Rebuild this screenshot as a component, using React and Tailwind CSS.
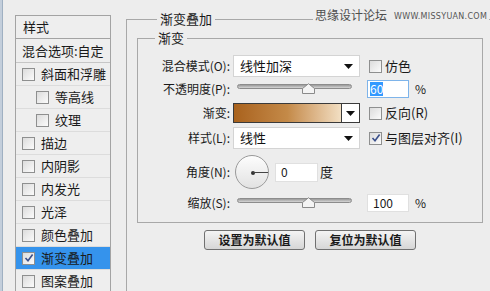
import React from "react";

const font = { fontFamily: '"Noto Sans CJK SC", "Noto Sans", sans-serif' };

const Check = ({ checked }) => (
  <span className="w-[13px] h-[13px] shrink-0 border border-[#8e8f8f] bg-gradient-to-br from-[#dcdcdc] to-[#fbfbfb] flex items-center justify-center">
    {checked && (
      <svg width="10" height="10" viewBox="0 0 10 10">
        <path d="M1.5 5 L4 7.8 L8.6 1.6" fill="none" stroke="#3a4f8a" strokeWidth="1.6" />
      </svg>
    )}
  </span>
);

const Arrow = () => (
  <svg width="9" height="5" viewBox="0 0 9 5">
    <path d="M0 0 H9 L4.5 5 Z" fill="#111" />
  </svg>
);

const Select = ({ value }) => (
  <div className="w-[127px] h-[22px] bg-white border border-[#d4d4d4] flex items-center justify-between pl-[6px] pr-[6px]">
    <span className="text-[13px] text-[#111]">{value}</span>
    <Arrow />
  </div>
);

const Slider = () => (
  <div className="w-[127px] h-[20px] relative">
    <div className="absolute left-[4px] right-[8px] top-[5px] h-[5px] rounded-full border border-[#8c8c8c] bg-gradient-to-b from-[#9a9a9a] to-[#d6d6d6]" />
    <svg className="absolute left-[69px] top-[4px]" width="13" height="11" viewBox="0 0 13 11">
      <path d="M0.5 10.5 V5.5 L6.5 0.7 L12.5 5.5 V10.5 Z" fill="#f4f4f4" stroke="#8a8a8a" />
    </svg>
  </div>
);

const Label = ({ children }) => (
  <span className="w-[95px] shrink-0 text-right pr-[3px] text-[12px] text-[#1a1a1a]">{children}</span>
);

const listRows = [
  { text: "斜面和浮雕", indent: false },
  { text: "等高线", indent: true },
  { text: "纹理", indent: true },
  { text: "描边" },
  { text: "内阴影" },
  { text: "内发光" },
  { text: "光泽" },
  { text: "颜色叠加" },
  { text: "渐变叠加", active: true, checked: true },
  { text: "图案叠加" },
];

export default function App() {
  return (
    <div className="w-[490px] h-[291px] overflow-hidden bg-[#ededed] relative flex text-[#1a1a1a]" style={font}>
      <div className="w-[3px] h-full bg-[#c3cedb] border-r border-[#9fb0c2] shrink-0" />

      {/* style list */}
      <div className="ml-[12px] mt-[15px] w-[96px] shrink-0 border border-[#a3a3a3] bg-[#eeeeee] h-[300px]">
        <div className="h-[23px] border-b border-[#a3a3a3] flex items-center pl-[7px] text-[13px]">样式</div>
        <div className="h-[24px] border-b border-[#c6c6c6] flex items-center pl-[6px] text-[13px] whitespace-nowrap">混合选项:自定</div>
        {listRows.map((r) => (
          <div
            key={r.text}
            className={`h-[23px] border-b border-[#dcdcdc] flex items-center gap-[6px] text-[13px] ${
              r.indent ? "pl-[20px]" : "pl-[6px]"
            } ${r.active ? "bg-[#3593ec]" : ""}`}
          >
            <Check checked={r.checked} />
            <span>{r.text}</span>
          </div>
        ))}
      </div>

      {/* right panel */}
      <fieldset className="ml-[15px] mt-[11px] w-[380px] h-[320px] shrink-0 border border-[#a8a8a8] pl-[10px]">
        <legend className="ml-[20px] px-[3px] text-[13px] leading-[16px]">渐变叠加</legend>

        <fieldset className="mt-[3px] w-[346px] border border-[#a8a8a8] pt-[9px] pb-[9px]">
          <legend className="ml-[17px] px-[3px] text-[13px] leading-[16px]">渐变</legend>

          <div className="flex items-center h-[22px]">
            <Label>混合模式(O):</Label>
            <Select value="线性加深" />
            <span className="ml-[9px] flex items-center gap-[3px] text-[13px]">
              <Check />
              仿色
            </span>
          </div>

          <div className="flex items-center h-[20px] mt-[2px]">
            <Label>不透明度(P):</Label>
            <Slider />
            <div className="ml-[7px] w-[42px] h-[18px] bg-white border border-[#7eb4ea] flex items-center pl-[2px]">
              <span className="bg-[#3399ff] text-white text-[12px] leading-[14px]">60</span>
            </div>
            <span className="ml-[6px] text-[12px]">%</span>
          </div>

          <div className="flex items-center h-[20px] mt-[4px]">
            <Label>渐变:</Label>
            <div className="w-[127px] h-[20px] flex border border-[#3a3a3a]">
              <div className="flex-1 bg-gradient-to-r from-[#a9621c] via-[#c48a48] to-[#f2dfc3]" />
              <div className="w-[18px] bg-white border-l border-[#3a3a3a] flex items-center justify-center">
                <Arrow />
              </div>
            </div>
            <span className="ml-[9px] flex items-center gap-[3px] text-[13px]">
              <Check />
              反向(R)
            </span>
          </div>

          <div className="flex items-center h-[22px] mt-[4px]">
            <Label>样式(L):</Label>
            <Select value="线性" />
            <span className="ml-[9px] flex items-center gap-[3px] text-[13px]">
              <Check checked />
              与图层对齐(I)
            </span>
          </div>

          <div className="flex items-center h-[34px] mt-[6px]">
            <Label>角度(N):</Label>
            <div className="ml-[2px] w-[34px] h-[34px] rounded-full border border-[#9a9a9a] bg-gradient-to-b from-[#fdfdfd] to-[#e2e2e2] relative">
              <div className="absolute left-[15px] top-[15px] w-[4px] h-[4px] rounded-full bg-[#333]" />
              <div className="absolute left-[17px] top-[16px] w-[15px] h-[1px] bg-[#444]" />
            </div>
            <div className="ml-[6px] w-[43px] h-[19px] bg-white border border-[#e0e0e0] flex items-center pl-[5px] text-[12px]">0</div>
            <span className="ml-[2px] text-[13px]">度</span>
          </div>

          <div className="flex items-center h-[20px] mt-[4px]">
            <Label>缩放(S):</Label>
            <Slider />
            <div className="ml-[7px] w-[42px] h-[18px] bg-white border border-[#e0e0e0] flex items-center pl-[5px] text-[12px]">100</div>
            <span className="ml-[6px] text-[12px]">%</span>
          </div>
        </fieldset>

        <div className="w-[346px] flex justify-center gap-[10px] mt-[7px]">
          <button className="w-[101px] h-[20px] rounded-[3px] border border-[#707070] bg-gradient-to-b from-[#f4f4f4] to-[#d6d6d6] text-[12px] font-semibold leading-none">
            设置为默认值
          </button>
          <button className="w-[101px] h-[20px] rounded-[3px] border border-[#707070] bg-gradient-to-b from-[#f4f4f4] to-[#d6d6d6] text-[12px] font-semibold leading-none">
            复位为默认值
          </button>
        </div>
      </fieldset>

      {/* watermark */}
      <div className="absolute left-[313px] top-[7px] flex items-end gap-[7px] bg-[#ededed] px-[2px] whitespace-nowrap">
        <span className="text-[12px] leading-[16px] text-[#4d4d4d]">思缘设计论坛</span>
        <span className="text-[8px] leading-[13px] tracking-[0.3px] text-[#555]" style={{ fontFamily: '"DejaVu Sans", sans-serif' }}>
          WWW.MISSYUAN.COM
        </span>
      </div>
    </div>
  );
}
